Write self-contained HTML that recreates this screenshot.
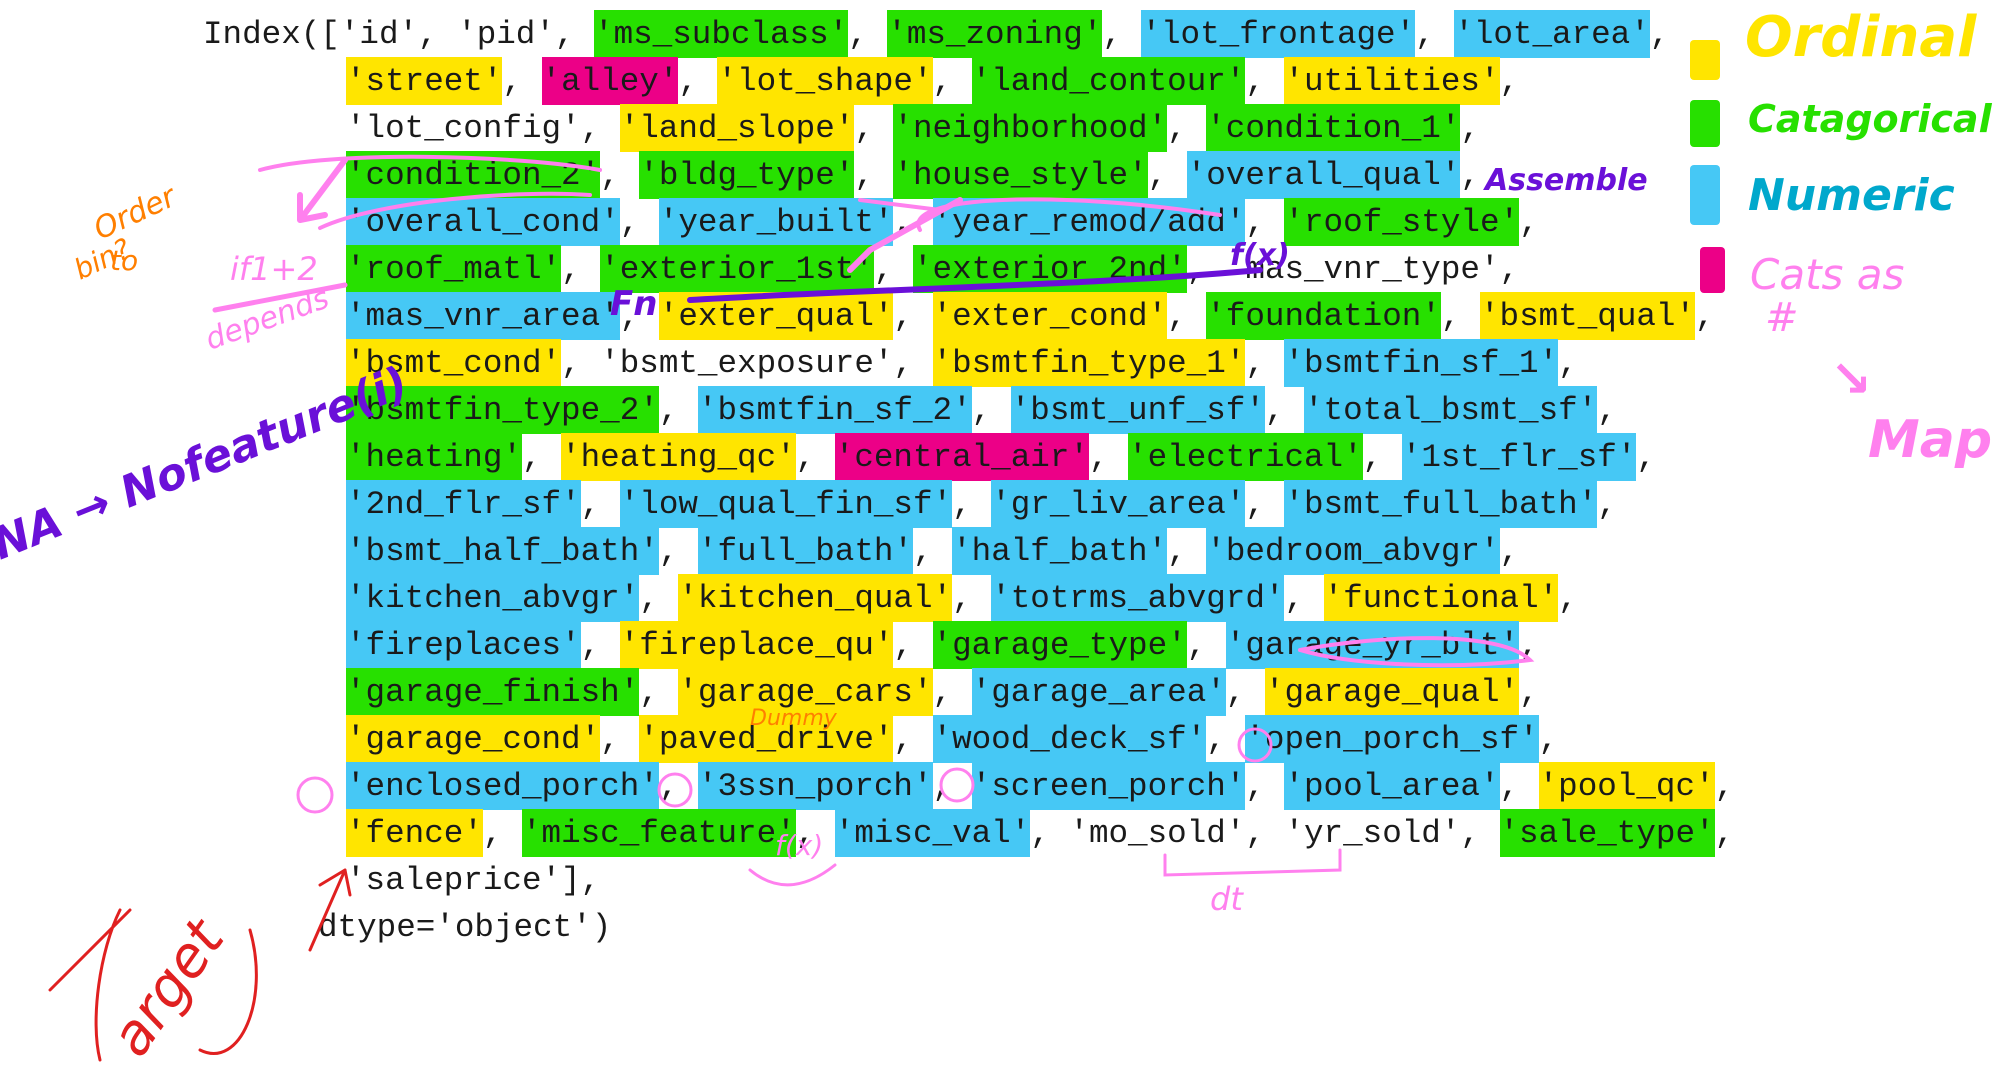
<!DOCTYPE html>
<html><head><meta charset="utf-8"><style>
html,body{margin:0;padding:0;background:#fff;width:2014px;height:1080px;overflow:hidden;position:relative}
.l{position:absolute;left:346px;font-family:"Liberation Mono",monospace;font-size:32.6px;line-height:47px;color:#1a1a1a;white-space:pre}
.y,.g,.b,.m{padding:6px 0 5px;}
.y{background:#ffe500}.g{background:#27e000}.b{background:#46c8f5}.m{background:#ec0087}
.leg{position:absolute;left:1690px;width:30px;border-radius:4px}
.lt{position:absolute;font-family:"DejaVu Sans",sans-serif;font-style:italic;font-weight:bold;white-space:nowrap}
</style></head><body>
<div class="l" style="left:203px;top:11px">Index(['id', 'pid', <span class="g">'ms_subclass'</span>, <span class="g">'ms_zoning'</span>, <span class="b">'lot_frontage'</span>, <span class="b">'lot_area'</span>,</div>
<div class="l" style="top:58px"><span class="y">'street'</span>, <span class="m">'alley'</span>, <span class="y">'lot_shape'</span>, <span class="g">'land_contour'</span>, <span class="y">'utilities'</span>,</div>
<div class="l" style="top:105px">'lot_config', <span class="y">'land_slope'</span>, <span class="g">'neighborhood'</span>, <span class="g">'condition_1'</span>,</div>
<div class="l" style="top:152px"><span class="g">'condition_2'</span>, <span class="g">'bldg_type'</span>, <span class="g">'house_style'</span>, <span class="b">'overall_qual'</span>,</div>
<div class="l" style="top:199px"><span class="b">'overall_cond'</span>, <span class="b">'year_built'</span>, <span class="b">'year_remod/add'</span>, <span class="g">'roof_style'</span>,</div>
<div class="l" style="top:246px"><span class="g">'roof_matl'</span>, <span class="g">'exterior_1st'</span>, <span class="g">'exterior_2nd'</span>, 'mas_vnr_type',</div>
<div class="l" style="top:293px"><span class="b">'mas_vnr_area'</span>, <span class="y">'exter_qual'</span>, <span class="y">'exter_cond'</span>, <span class="g">'foundation'</span>, <span class="y">'bsmt_qual'</span>,</div>
<div class="l" style="top:340px"><span class="y">'bsmt_cond'</span>, 'bsmt_exposure', <span class="y">'bsmtfin_type_1'</span>, <span class="b">'bsmtfin_sf_1'</span>,</div>
<div class="l" style="top:387px"><span class="g">'bsmtfin_type_2'</span>, <span class="b">'bsmtfin_sf_2'</span>, <span class="b">'bsmt_unf_sf'</span>, <span class="b">'total_bsmt_sf'</span>,</div>
<div class="l" style="top:434px"><span class="g">'heating'</span>, <span class="y">'heating_qc'</span>, <span class="m">'central_air'</span>, <span class="g">'electrical'</span>, <span class="b">'1st_flr_sf'</span>,</div>
<div class="l" style="top:481px"><span class="b">'2nd_flr_sf'</span>, <span class="b">'low_qual_fin_sf'</span>, <span class="b">'gr_liv_area'</span>, <span class="b">'bsmt_full_bath'</span>,</div>
<div class="l" style="top:528px"><span class="b">'bsmt_half_bath'</span>, <span class="b">'full_bath'</span>, <span class="b">'half_bath'</span>, <span class="b">'bedroom_abvgr'</span>,</div>
<div class="l" style="top:575px"><span class="b">'kitchen_abvgr'</span>, <span class="y">'kitchen_qual'</span>, <span class="b">'totrms_abvgrd'</span>, <span class="y">'functional'</span>,</div>
<div class="l" style="top:622px"><span class="b">'fireplaces'</span>, <span class="y">'fireplace_qu'</span>, <span class="g">'garage_type'</span>, <span class="b">'garage_yr_blt'</span>,</div>
<div class="l" style="top:669px"><span class="g">'garage_finish'</span>, <span class="y">'garage_cars'</span>, <span class="b">'garage_area'</span>, <span class="y">'garage_qual'</span>,</div>
<div class="l" style="top:716px"><span class="y">'garage_cond'</span>, <span class="y">'paved_drive'</span>, <span class="b">'wood_deck_sf'</span>, <span class="b">'open_porch_sf'</span>,</div>
<div class="l" style="top:763px"><span class="b">'enclosed_porch'</span>, <span class="b">'3ssn_porch'</span>, <span class="b">'screen_porch'</span>, <span class="b">'pool_area'</span>, <span class="y">'pool_qc'</span>,</div>
<div class="l" style="top:810px"><span class="y">'fence'</span>, <span class="g">'misc_feature'</span>, <span class="b">'misc_val'</span>, 'mo_sold', 'yr_sold', <span class="g">'sale_type'</span>,</div>
<div class="l" style="top:857px">'saleprice'],</div>
<div class="l" style="left:318px;top:904px">dtype='object')</div>

<div class="leg" style="top:40px;height:40px;background:#ffe500"></div>
<div class="leg" style="top:100px;height:47px;background:#27e000"></div>
<div class="leg" style="top:165px;height:60px;background:#46c8f5"></div>
<div class="leg" style="top:247px;height:46px;background:#ec0087;left:1700px;width:25px"></div>
<div class="lt" style="left:1745px;top:5px;font-size:56px;color:#ffe500">Ordinal</div>
<div class="lt" style="left:1748px;top:97px;font-size:38px;color:#27e000">Catagorical</div>
<div class="lt" style="left:1748px;top:170px;font-size:44px;color:#00a8cc">Numeric</div>
<div class="lt" style="left:1750px;top:250px;font-size:42px;color:#ff80ee;font-weight:normal">Cats as</div>
<div class="lt" style="left:1765px;top:295px;font-size:40px;color:#ff80ee;font-weight:normal">#</div>
<div class="lt" style="left:1830px;top:350px;font-size:50px;color:#ff80ee">↘</div>
<div class="lt" style="left:1868px;top:410px;font-size:52px;color:#ff80ee">Map</div>

<svg width="2014" height="1080" style="position:absolute;left:0;top:0" fill="none" stroke-linecap="round">
 <text x="0" y="560" transform="rotate(-22 0 560)" font-family="DejaVu Sans" font-style="italic" font-weight="bold" font-size="44" fill="#6a10d8">NA → Nofeature(i)</text>
 <text x="100" y="240" transform="rotate(-25 100 240)" font-family="DejaVu Sans" font-style="italic" font-size="30" fill="#ff7f00">Order</text>
 <text x="110" y="270" font-family="DejaVu Sans" font-style="italic" font-size="28" fill="#ff7f00">to</text>
 <text x="80" y="280" transform="rotate(-25 80 280)" font-family="DejaVu Sans" font-style="italic" font-size="28" fill="#ff7f00">bin?</text>
 <text x="230" y="280" font-family="DejaVu Sans" font-style="italic" font-size="32" fill="#ff80ee">if1+2</text>
 <line x1="215" y1="310" x2="345" y2="285" stroke="#ff80ee" stroke-width="5"/>
 <text x="210" y="350" transform="rotate(-20 210 350)" font-family="DejaVu Sans" font-style="italic" font-size="30" fill="#ff80ee">depends</text>
 <path d="M345 160 L300 220 M300 220 L300 195 M300 220 L325 215" stroke="#ff80ee" stroke-width="6"/>
 <path d="M320 228 C380 200 520 190 590 195 M260 170 C330 150 520 155 600 170" stroke="#ff80ee" stroke-width="4"/>
 <path d="M690 300 C850 290 1100 285 1260 270" stroke="#6a10d8" stroke-width="6"/>
 <text x="1230" y="265" font-family="DejaVu Sans" font-style="italic" font-weight="bold" font-size="30" fill="#6a10d8">f(x)</text>
 <text x="1485" y="190" font-family="DejaVu Sans" font-style="italic" font-weight="bold" font-size="30" fill="#6a10d8">Assemble</text>
 <text x="610" y="315" font-family="DejaVu Sans" font-style="italic" font-weight="bold" font-size="34" fill="#6a10d8">Fn</text>
 <path d="M920 230 C900 195 1060 190 1220 215 M860 200 L940 210" stroke="#ff80ee" stroke-width="4"/>
 <path d="M870 250 L960 200 M850 270 L870 250" stroke="#ff80ee" stroke-width="6"/>
 <path d="M1300 650 C1380 635 1500 630 1530 660 C1450 670 1350 665 1300 650" stroke="#ff80ee" stroke-width="4"/>
 <path d="M1165 855 L1165 875 L1340 870 L1340 850" stroke="#ff80ee" stroke-width="3"/>
 <text x="1210" y="910" font-family="DejaVu Sans" font-style="italic" font-size="32" fill="#ff80ee">dt</text>
 <text x="775" y="855" font-family="DejaVu Sans" font-style="italic" font-size="28" fill="#ff80ee">f(x)</text>
 <path d="M750 870 C780 895 810 885 835 865" stroke="#ff80ee" stroke-width="3"/>
 <circle cx="315" cy="795" r="17" stroke="#ff80ee" stroke-width="3"/>
 <circle cx="675" cy="790" r="16" stroke="#ff80ee" stroke-width="3"/>
 <circle cx="957" cy="785" r="16" stroke="#ff80ee" stroke-width="3"/>
 <circle cx="1255" cy="745" r="16" stroke="#ff80ee" stroke-width="3"/>
 <path d="M310 950 L345 870 M345 870 L320 885 M345 870 L350 895" stroke="#e02020" stroke-width="3"/>
 <path d="M50 990 L130 910 M120 910 C100 950 90 1020 100 1060" stroke="#e02020" stroke-width="3"/>
 <text x="140" y="1060" transform="rotate(-55 140 1060)" font-family="DejaVu Sans" font-style="italic" font-size="56" fill="#e02020">arget</text>
 <path d="M250 930 C270 1000 240 1070 200 1050" stroke="#e02020" stroke-width="3"/>
 <text x="750" y="725" font-family="DejaVu Sans" font-style="italic" font-size="22" fill="#ff7f00">Dummy</text>
</svg>
</body></html>
